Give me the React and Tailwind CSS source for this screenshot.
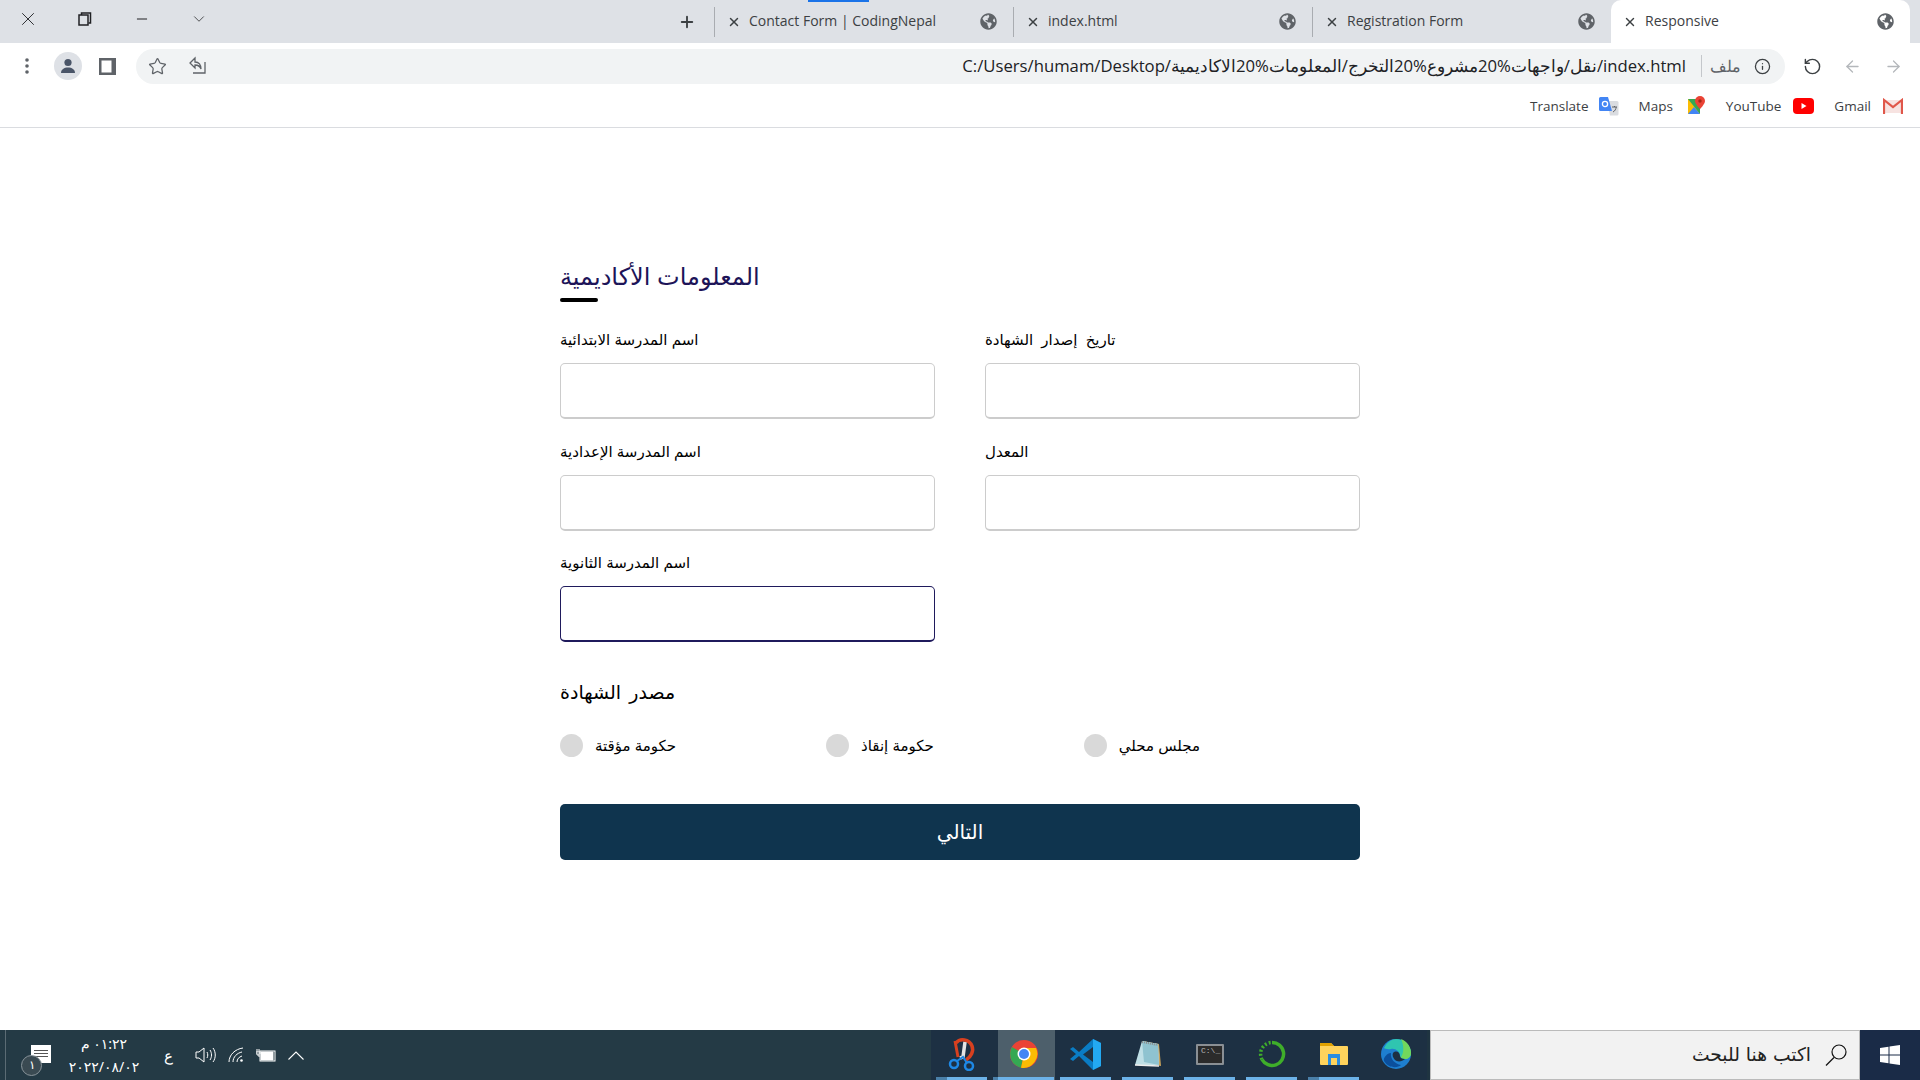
import { X, Minus, ChevronDown, Plus, Star, RotateCcw, ArrowLeft, ArrowRight, Info } from 'lucide-react';
import { FaGlobeAmericas } from 'react-icons/fa';

const UI_FONT = "font-['Open_Sans',sans-serif]";

const tabs = [
  { title: 'Contact Form | CodingNepal' },
  { title: 'index.html' },
  { title: 'Registration Form' },
  { title: 'Responsive', active: true },
];

const Tab = ({ title, active }) => (
  <div
    className={`flex items-center h-full w-[299px] pl-[12px] pr-[16px] ${
      active ? 'bg-white rounded-t-[10px]' : 'border-l border-[#a9acb1] my-0'
    }`}
  >
    <X size={14} strokeWidth={2.5} className="text-[#3c4043] shrink-0" />
    <span className="ml-[8px] -mt-[2px] text-[14px] text-[#3c4043] flex-1 whitespace-nowrap">{title}</span>
    <FaGlobeAmericas size={17} className="text-[#5f6368] shrink-0" />
  </div>
);

const TabBar = () => (
  <div className="relative flex items-center h-[43px] bg-[#dee1e6] text-[#202124]">
    <div className="flex items-center h-full flex-1 pb-[5px]">
      <X size={22} strokeWidth={1} className="ml-[17px]" />
      <svg width="14" height="14" viewBox="0 0 14 14" className="ml-[39px]" fill="none" stroke="#202124" strokeWidth="1.5">
        <rect x="1" y="3" width="9" height="10" />
        <path d="M3.5 3V1h9v10h-2" />
      </svg>
      <Minus size={16} strokeWidth={1.5} className="ml-[42px]" />
      <ChevronDown size={18} strokeWidth={1} className="ml-[40px]" />
      <Plus size={18} strokeWidth={2.5} className="ml-auto mr-[18px] mt-[5px] text-[#3c4043]" />
    </div>
    <div className="absolute left-[808px] top-0 w-[61px] h-[2px] bg-[#1a73e8]" />
    <div className="flex items-center h-full pr-[10px]">
      {tabs.map((t) => (
        <div key={t.title} className={t.active ? 'h-full pt-0' : 'h-[30px]'}>
          <Tab title={t.title} active={t.active} />
        </div>
      ))}
    </div>
  </div>
);

const Toolbar = () => (
  <div className="flex items-center h-[42px] bg-white pt-[4px] text-[#5f6368]">
    <svg width="6" height="18" viewBox="0 0 6 18" className="ml-[24px]" fill="#5f6368">
      <circle cx="3" cy="3" r="1.8" />
      <circle cx="3" cy="9" r="1.8" />
      <circle cx="3" cy="15" r="1.8" />
    </svg>
    <div className="ml-[24px] w-[28px] h-[28px] rounded-full bg-[#dee1e6] flex items-center justify-center">
      <svg width="18" height="18" viewBox="0 0 18 18" fill="#4a5568">
        <circle cx="9" cy="5.5" r="3.6" />
        <path d="M2 16c0-3.6 3.2-5.5 7-5.5s7 1.900 7 5.500z" />
      </svg>
    </div>
    <svg width="17" height="17" viewBox="0 0 17 17" className="ml-[17px]" fill="#5f6368">
      <path fillRule="evenodd" d="M0 0h17v17H0zM2.500 2.500v12h10v-12z" />
    </svg>
    <div className="ml-[20px] flex items-center h-[35px] w-[1649px] rounded-full bg-[#f1f3f4]">
      <Star size={19} strokeWidth={1.6} className="ml-[12px] shrink-0" />
      <svg width="20" height="20" viewBox="0 0 20 20" className="ml-[20px] shrink-0" fill="none" stroke="#5f6368" strokeWidth="1.3">
        <path d="M8 2 3 7l5 5V9c3 0 5 1 6 4 0-4-2-7-6-7z" />
        <path d="M6 17h12V6" />
      </svg>
      <div dir="ltr" className={`flex-1 text-right text-[16.7px] text-[#202124] whitespace-nowrap ${UI_FONT}`}>
        C:/Users/humam/Desktop/نقل/واجهات%20مشروع%20التخرج/المعلومات%20الاكاديمية/index.html
      </div>
      <div className="ml-[15px] h-[22px] border-l border-[#c4c7cb]" />
      <span className="ml-[8px] text-[16px] text-[#5f6368]">ملف</span>
      <Info size={17} strokeWidth={1.8} className="ml-[13px] mr-[14px] text-[#3c4043]" />
    </div>
    <RotateCcw size={19} strokeWidth={1.8} className="ml-[18px] text-[#3c4043]" />
    <ArrowLeft size={19} strokeWidth={1.6} className="ml-[21px] text-[#b4b7bb]" />
    <ArrowRight size={19} strokeWidth={1.6} className="ml-[22px] text-[#b4b7bb]" />
  </div>
);

const TranslateIcon = () => (
  <svg width="20" height="20" viewBox="0 0 20 20">
    <path d="M8 5h10a1.500 1.500 0 0 1 1.500 1.500V18a1.500 1.500 0 0 1-1.500 1.500h-7z" fill="#dadce0" />
    <path d="M1.500 1H9l4 14H1.500A1.500 1.500 0 0 1 0 13.500v-11A1.500 1.500 0 0 1 1.500 1z" fill="#4285f4" />
    <circle cx="6" cy="8" r="2.600" fill="none" stroke="#fff" strokeWidth="1.300" />
    <path d="M13 11h5M15.500 10v1M14 16c2-1 3-3 3.200-5" stroke="#5f6368" strokeWidth="1" fill="none" />
  </svg>
);

const MapsIcon = () => (
  <svg width="19" height="20" viewBox="0 0 19 20">
    <path d="M1 3h12v15H1z" fill="#34a853" />
    <path d="M1 3l12 15H1z" fill="#fbbc04" />
    <path d="M1 18l6-7 6 7z" fill="#4285f4" />
    <path d="M13 0a5 5 0 0 1 5 5c0 3-5 8-5 8s-5-5-5-8a5 5 0 0 1 5-5z" fill="#ea4335" />
    <circle cx="13" cy="5" r="1.700" fill="#a52714" />
  </svg>
);

const YoutubeIcon = () => (
  <svg width="21" height="16" viewBox="0 0 21 16">
    <rect width="21" height="16" rx="4" fill="#ff0000" />
    <path d="M8.500 5v6l5-3z" fill="#fff" />
  </svg>
);

const GmailIcon = () => (
  <svg width="20" height="16" viewBox="0 0 20 16" fill="none">
    <path d="M1 15V2h18v13" fill="#f7e3e1" />
    <path d="M1 16V2l9 7 9-7v14" stroke="#e0574a" strokeWidth="2.200" />
  </svg>
);

const bookmarks = [
  { name: 'Translate', icon: <TranslateIcon />, gap: 'ml-[10px]' },
  { name: 'Maps', icon: <MapsIcon />, gap: 'ml-[14px]' },
  { name: 'YouTube', icon: <YoutubeIcon />, gap: 'ml-[12px]' },
  { name: 'Gmail', icon: <GmailIcon />, gap: 'ml-[12px]' },
];

const Bookmarks = () => (
  <div className="flex items-center justify-end h-[43px] gap-[20px] pr-[17px] bg-white border-b border-[#dadce0]">
    {bookmarks.map((b) => (
      <div key={b.name} className="flex items-center">
        <span className="text-[13.5px] text-[#3c4043]">{b.name}</span>
        <span className={b.gap}>{b.icon}</span>
      </div>
    ))}
  </div>
);

const Field = ({ label, focused, wide }) => (
  <div className="flex flex-col">
    <label className={`text-[15px] leading-[20px] text-black mb-[13px] ${wide ? '[word-spacing:4px]' : ''}`}>{label}</label>
    <input
      dir="rtl"
      className={`h-[56px] w-full rounded-[5px] outline-none border border-b-2 ${
        focused ? 'border-[#1f1a5c]' : 'border-[#cccccc]'
      }`}
    />
  </div>
);

const Radio = ({ label }) => (
  <label className="flex items-center gap-[12px]">
    <span className="w-[23px] h-[23px] rounded-full bg-[#d9d9d9]" />
    <span className="text-[15px] leading-[25px] text-black">{label}</span>
  </label>
);

const AcademicForm = () => (
  <main className="flex-1 bg-white">
    <form className="w-[800px] mx-auto pt-[132px] font-['Liberation_Sans','DejaVu_Sans',sans-serif]">
      <h1 className="text-[24px] leading-[34px] text-[#1d1458] font-normal">المعلومات الأكاديمية</h1>
      <div className="mt-[4px] w-[38px] h-[4px] rounded-[2px] bg-black" />
      <div className="mt-[28px] grid grid-cols-2 gap-x-[50px] gap-y-[22.5px]">
        <Field label="اسم المدرسة الابتدائية" />
        <Field label="تاريخ إصدار الشهادة" wide />
        <Field label="اسم المدرسة الإعدادية" />
        <Field label="المعدل" />
        <Field label="اسم المدرسة الثانوية" focused />
      </div>
      <h2 className="mt-[38px] text-[19px] leading-[26px] text-black font-normal [word-spacing:3px]">مصدر الشهادة</h2>
      <div className="mt-[27px] w-[640px] flex justify-between">
        <Radio label="حكومة مؤقتة" />
        <Radio label="حكومة إنقاذ" />
        <Radio label="مجلس محلي" />
      </div>
      <button type="button" className="mt-[46px] w-full h-[56px] rounded-[5px] bg-[#0f344e] text-white text-[20px]">
        التالي
      </button>
    </form>
  </main>
);

const SnipIcon = () => (
  <svg width="28" height="34" viewBox="0 0 28 34" fill="none">
    <path d="M8 6C12 1 21 2 24 9c2 5-1 11-6 14" stroke="#d8401f" strokeWidth="3.500" />
    <path d="M7 4l3 16" stroke="#d8401f" strokeWidth="3" />
    <path d="M17 5l-2 15-3 1" stroke="#e4e4e4" strokeWidth="3.500" />
    <circle cx="6" cy="27" r="4" stroke="#1e88e5" strokeWidth="2.500" />
    <circle cx="21" cy="29" r="4" stroke="#1e88e5" strokeWidth="2.500" />
    <path d="M9 24l6-4 4 6" stroke="#1e88e5" strokeWidth="2" />
  </svg>
);

const ChromeIcon = () => (
  <svg width="28" height="28" viewBox="0 0 28 28">
    <circle cx="14" cy="14" r="14" fill="#ea4335" />
    <path d="M14 14 2 7a14 14 0 0 0 9 20.700z" fill="#34a853" />
    <path d="M14 8h12a14 14 0 0 1-15 19.700L14 14z" fill="#fbbc04" />
    <circle cx="14" cy="14" r="6.500" fill="#fff" />
    <circle cx="14" cy="14" r="5" fill="#4285f4" />
  </svg>
);

const VsCodeIcon = () => (
  <svg width="32" height="31" viewBox="0 0 32 31">
    <path d="M23 0 31 4v23l-8 4L9 17 3 22l-3-2 6-5-6-5 3-2 6 5z" fill="#0a7cc4" />
    <path d="M23 0 31 4v23l-8 4z" fill="#23a9f2" />
    <path d="M23 8v15l-10-7.500z" fill="#1f3344" />
  </svg>
);

const NotepadIcon = () => (
  <svg width="28" height="28" viewBox="0 0 28 28">
    <path d="M9 1 25 4l2 22-17-3z" fill="#c9a25b" />
    <path d="M8 1 24 4l1 21L1 25z" fill="#bfdfe6" />
    <path d="M8 1 24 4l1 21L10 22z" fill="#8fc3d0" />
    <path d="M8 2 24 5" stroke="#8a8a8a" strokeWidth="2" strokeDasharray="1 1" />
    <path d="M1 25l24 1" stroke="#eee" strokeWidth="1.500" />
  </svg>
);

const CmdIcon = () => (
  <div className="w-[28px] h-[21px] rounded-[1px] border-2 border-[#8a8f94] bg-[#2b2b2b] text-[#b8b8b8] text-[8px] leading-[9px] pl-[3px] font-['Liberation_Mono',monospace]">
    C:\_
  </div>
);

const GreenRingIcon = () => (
  <svg width="28" height="28" viewBox="0 0 28 28" fill="none">
    <path d="M14 2.500a11.500 11.500 0 1 1-10 17" stroke="#3fae2a" strokeWidth="3.500" />
    <path d="M4 19.500A11.500 11.500 0 0 1 14 2.500" stroke="#3fae2a" strokeWidth="3.500" strokeDasharray="2 2" />
  </svg>
);

const FolderIcon = () => (
  <svg width="28" height="24" viewBox="0 0 28 24">
    <path d="M0 2a1 1 0 0 1 1-1h10l3 3h13a1 1 0 0 1 1 1v17a1 1 0 0 1-1 1H1a1 1 0 0 1-1-1z" fill="#ffd35c" />
    <path d="M0 2a1 1 0 0 1 1-1h10l3 3H0z" fill="#e0a100" />
    <path d="M8 12h12v11h-3v-7h-6v7H8z" fill="#2b8ee0" />
  </svg>
);

const EdgeIcon = () => (
  <svg width="30" height="30" viewBox="0 0 30 30">
    <circle cx="15" cy="15" r="15" fill="#1e7fd0" />
    <path d="M3 9C6 3 11 0 15 0c8 0 15 6 15 14 0 4-3 6-6 6-3 0-5-1-5-3 0-5-5-8-9-7-3 .5-6 0-7-1z" fill="#2fc5b0" />
    <path d="M20 0c6 2 10 8 10 14 0 4-3 6-6 6-2 0-4-1-4-2 3-4 3-12 0-18z" fill="#72d85c" />
    <path d="M10 14c-1 6 4 11 10 12-3 3-12 4-17-4-1-3 3-8 7-8z" fill="#0b4f9c" />
    <path d="M12 14c3-3 7-1 7 3 0 2 2 3 5 3-3 3-8 3-10 1-2-2-3-5-2-7z" fill="#1d3043" />
  </svg>
);

const taskApps = [
  { id: 'snip', icon: <SnipIcon />, bar: 'left-[5px] right-[6px]', mark: 'w-[11px]' },
  { id: 'chrome', icon: <ChromeIcon />, bar: 'left-0 right-[1px]', mark: 'w-[5px]', active: true },
  { id: 'vscode', icon: <VsCodeIcon />, bar: 'left-[5px] right-[6px]' },
  { id: 'notepad', icon: <NotepadIcon />, bar: 'left-[5px] right-[6px]' },
  { id: 'cmd', icon: <CmdIcon />, bar: 'left-[5px] right-[6px]' },
  { id: 'ring', icon: <GreenRingIcon />, bar: 'left-[5px] right-[6px]' },
  { id: 'folder', icon: <FolderIcon />, bar: 'left-[5px] right-[6px]', mark: 'w-[11px]' },
  { id: 'edge', icon: <EdgeIcon /> },
];

const Taskbar = () => (
  <footer className="flex h-[50px] bg-[#1f3441] text-white shrink-0">
    <div className="flex items-center w-[931px] bg-[#243a45]">
      <div className="ml-[5px] h-full w-px bg-[#5b6b74]" />
      <div className="relative ml-[25px] w-[20px] h-[18px] -mt-[3px] bg-white flex flex-col justify-center gap-[2px] px-[3px]">
        <div className="h-px bg-[#555]" />
        <div className="h-px bg-[#555]" />
        <div className="h-px bg-[#555]" />
        <div className="absolute left-[-10px] top-[10px] w-[21px] h-[21px] rounded-full bg-[#3a4a52] border border-[#8a959b] flex items-center justify-center text-[12px]">
          ١
        </div>
      </div>
      <div className="ml-[17px] w-[72px] text-center text-[14px] leading-[23px] font-['Noto_Sans','DejaVu_Sans',sans-serif]">
        <div dir="rtl">٠١:٢٢ م</div>
        <div>٢٠٢٢/٠٨/٠٢</div>
      </div>
      <span className="ml-[24px] text-[15px]">ع</span>
      <svg width="21" height="18" viewBox="0 0 21 18" className="ml-[22px]" fill="none" stroke="#fff" strokeWidth="1">
        <path d="M1 6h3l5-4v14l-5-4H1z" />
        <path d="M12 6c1 2 1 4 0 6M15 4c2 3 2 7 0 10M18 2c3 4 3 10 0 14" />
      </svg>
      <svg width="16" height="16" viewBox="0 0 16 16" className="ml-[12px]" fill="none" stroke="#fff" strokeWidth="1">
        <path d="M1 15C1 8 7 2 15 1M5 15c0-5 4-9 9-10M9 15c0-3 2-5 5-6" />
        <circle cx="13.500" cy="13.500" r="1.300" fill="#fff" stroke="none" />
      </svg>
      <svg width="20" height="13" viewBox="0 0 20 13" className="ml-[12px]" fill="none" stroke="#fff" strokeWidth="1">
        <rect x="4" y="2" width="15" height="10" />
        <rect x="5" y="3" width="12" height="8" fill="#fff" />
        <path d="M1 0v3M3 0v3M0 3h4v2H0zM2 5v2h2" />
      </svg>
      <svg width="16" height="9" viewBox="0 0 16 9" className="ml-[12px]" fill="none" stroke="#fff" strokeWidth="1.100">
        <path d="M.5 8.500 8 1l7.500 7.500" />
      </svg>
    </div>
    <div className="flex w-[496px] bg-[#1d3043]">
      {taskApps.map((app) => (
        <div key={app.id} className="relative w-[62px] h-full flex items-center justify-center">
          {app.active && <div className="absolute inset-y-0 left-[5px] right-0 bg-[#4d5f6b]" />}
          <span className="relative -mt-[2px]">{app.icon}</span>
          {app.bar && (
            <div className={`absolute bottom-0 h-[3px] bg-[#6cb2e8] ${app.bar}`}>
              {app.mark && <div className={`h-full bg-[#4a7fa8] ${app.mark}`} />}
            </div>
          )}
        </div>
      ))}
    </div>
    <div className="flex items-center justify-end ml-[3px] w-[430px] bg-[#f2f2f2] border-y border-x border-[#bbbbbb] text-[#222]">
      <span className="text-[18.7px] font-['DejaVu_Sans',sans-serif] mr-[14px]">اكتب هنا للبحث</span>
      <svg width="22" height="22" viewBox="0 0 22 22" className="mr-[12px]" fill="none" stroke="#111" strokeWidth="1.200">
        <circle cx="14" cy="8" r="7" />
        <path d="M9 13.500 1 21.500" />
      </svg>
    </div>
    <div className="w-[60px] bg-[#1a2b47] flex items-center justify-center">
      <svg width="20" height="20" viewBox="0 0 20 20" fill="#fff">
        <path d="M0 3l8.500-1.200v7.700H0zM9.500 1.600 20 0v9.500H9.500zM0 10.500h8.500v7.700L0 17zM9.500 10.500H20V20L9.500 18.400z" />
      </svg>
    </div>
  </footer>
);

export default function App() {
  return (
    <div className={`w-[1920px] h-[1080px] flex flex-col overflow-hidden ${UI_FONT}`}>
      <TabBar />
      <Toolbar />
      <Bookmarks />
      <AcademicForm />
      <Taskbar />
    </div>
  );
}
